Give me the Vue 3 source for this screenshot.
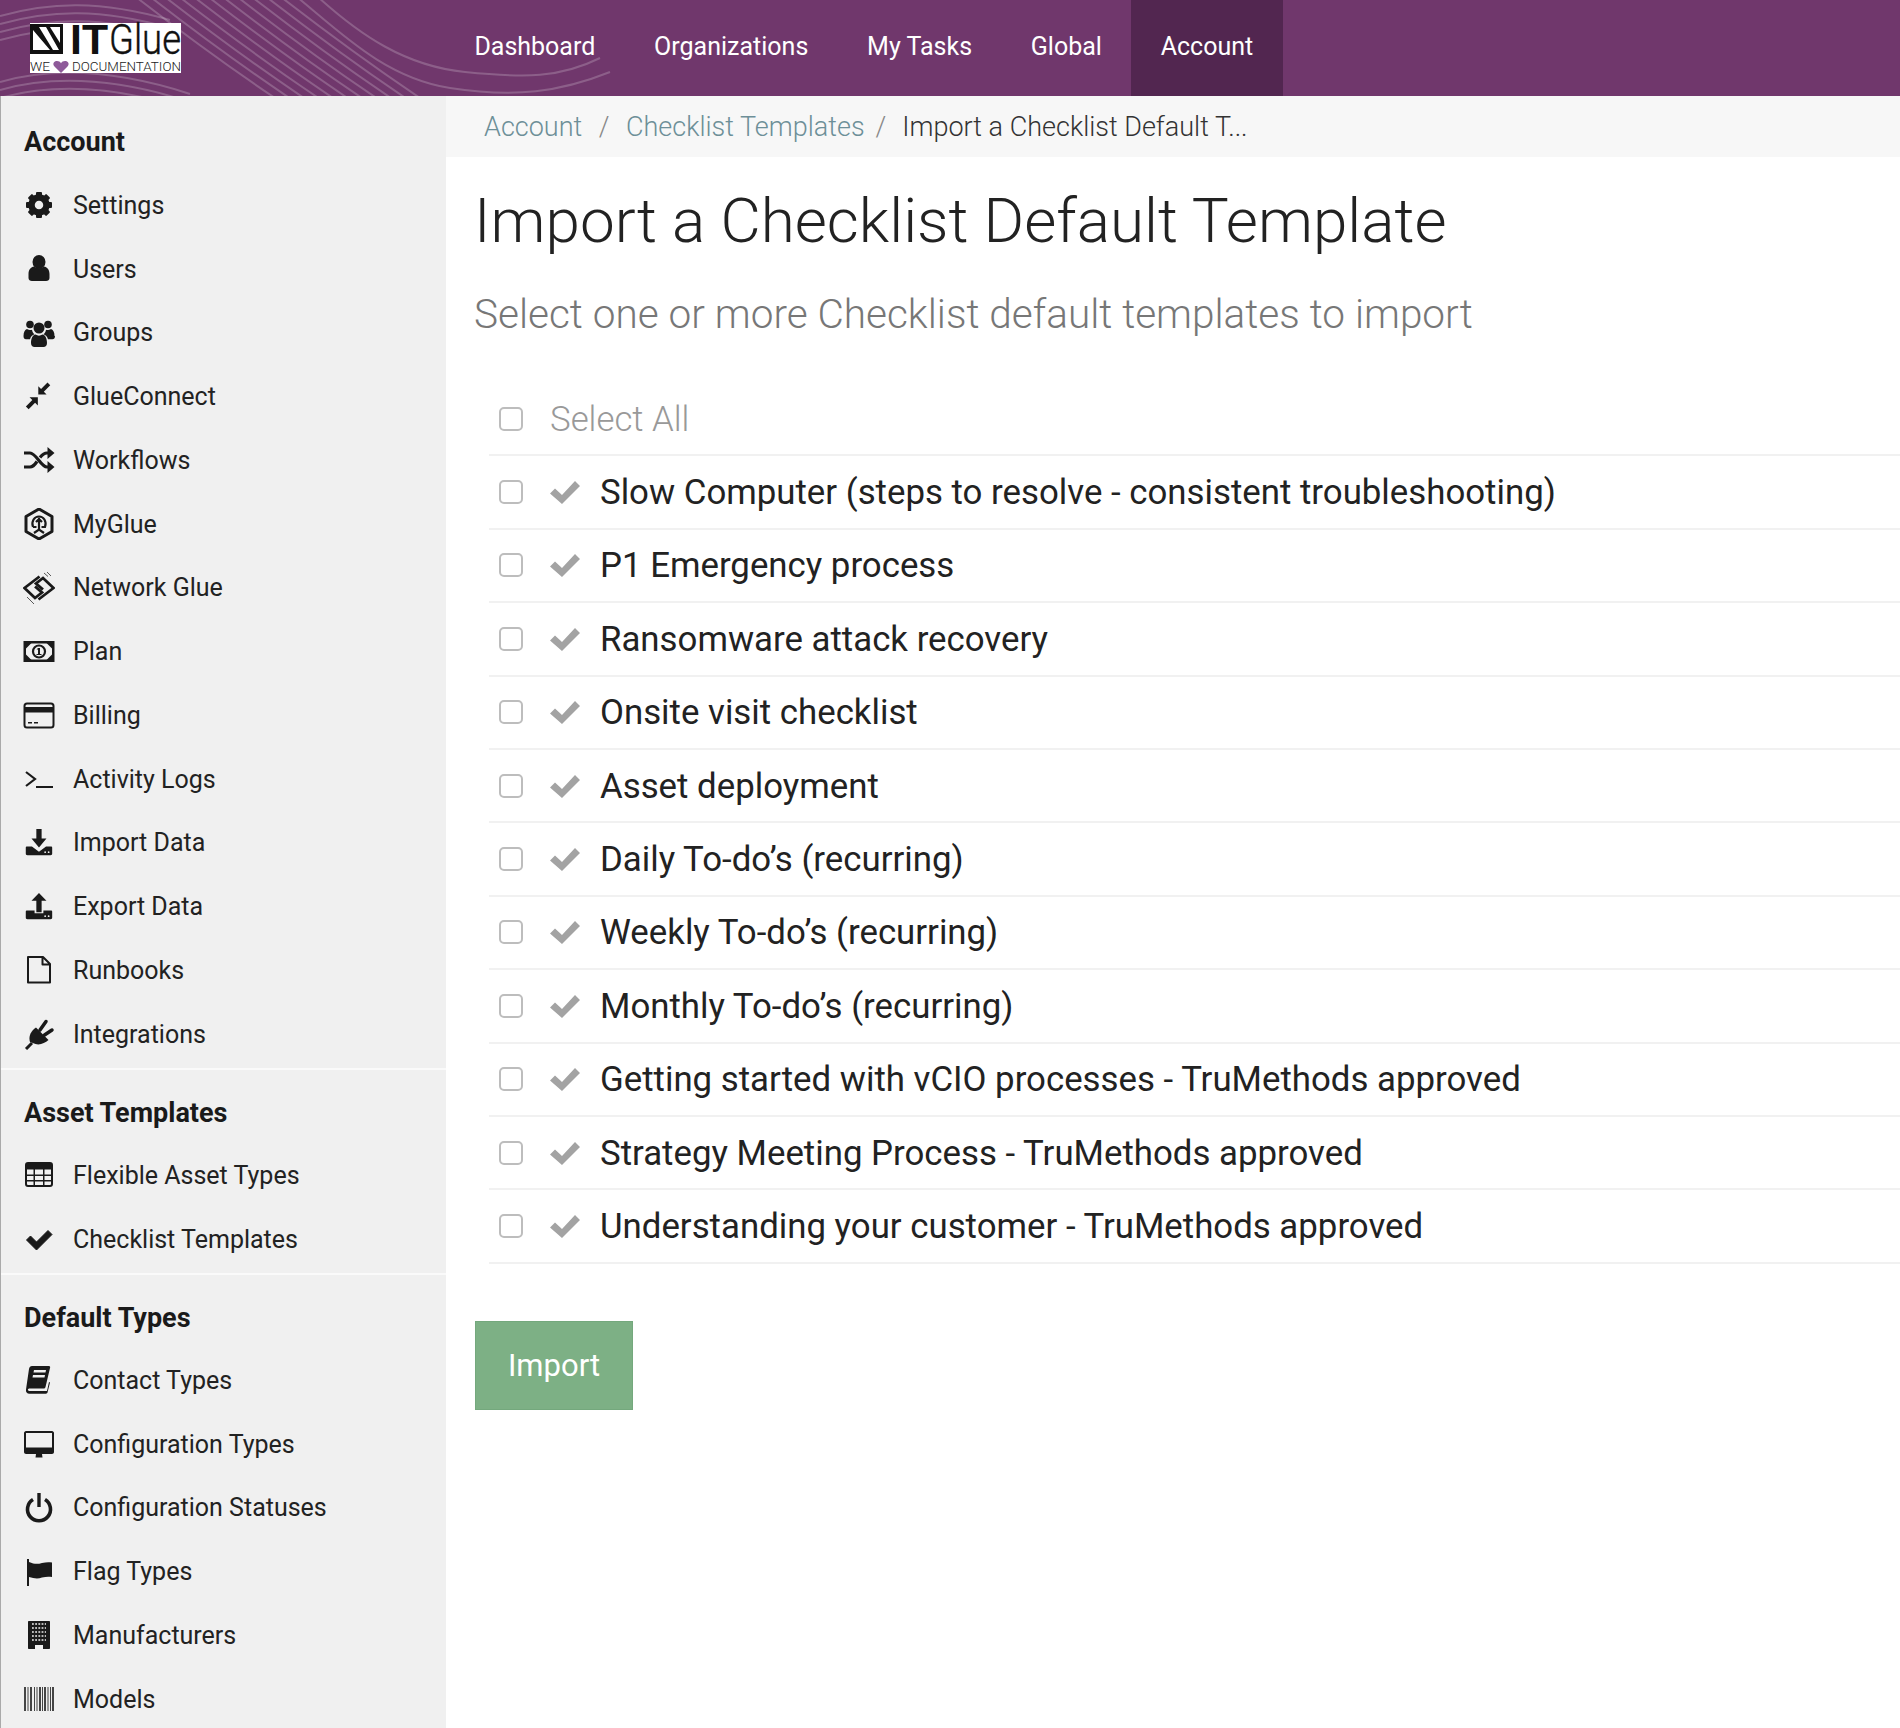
<script setup>
const navItems = ['Dashboard', 'Organizations', 'My Tasks', 'Global', 'Account']

// background lines of the header
const waves = []
for (let i = 0; i < 11; i++) {
  const x = 136 + i * 14.500
  waves.push(`M${x} -3 C${x + 40} 28 ${x + 85} 62 ${x + 145} 102`)
}
waves.push('M297 -3 C340 32 385 78 450 88 S560 92 610 72')
waves.push('M318 -3 C360 35 405 66 465 72 S560 78 600 58')
for (let i = 0; i < 4; i++) {
  const y = 6 + i * 8
  waves.push(`M0 ${y + 10} C50 ${y - 4} 100 ${y - 6} 170 ${y + 14}`)
}
for (let i = 0; i < 3; i++) {
  const y = 76 + i * 8
  waves.push(`M0 ${y + 6} C50 ${y - 8} 110 ${y - 8} 190 ${y + 18}`)
}

const icons = {
  gear: '<circle cx="16" cy="16" r="7.500" fill="none" stroke="currentColor" stroke-width="6.500"/>' +
    [0, 45, 90, 135, 180, 225, 270, 315].map(a => `<rect x="13" y="3" width="6" height="6" rx="1" transform="rotate(${a} 16 16)"/>`).join(''),
  user: '<ellipse cx="16" cy="9" rx="6.500" ry="7"/><path d="M5.500 25v-4c0-4.500 2.500-7 5.500-7.500 3 2.200 7 2.200 10 0 3 .5 5.500 3 5.500 7.500v4c0 2-1.500 3-3.500 3H9c-2 0-3.500-1-3.500-3z"/>',
  group: '<circle cx="16" cy="11" r="5.500"/><circle cx="7" cy="7.500" r="3.800"/><circle cx="25" cy="7.500" r="3.800"/><path d="M.5 19c0-4 1.500-6.500 3.500-7 2 1.300 4 1.300 5 .8.300 2 1.300 3.500 2.500 4.500-2 .7-4 2.500-4.500 5H3c-1.500 0-2.500-1-2.500-3.300zM31.500 19c0-4-1.500-6.500-3.500-7-2 1.300-4 1.300-5 .8-.3 2-1.300 3.500-2.500 4.500 2 .7 4 2.500 4.500 5h4.500c1.500 0 2.500-1 2.500-3.300z"/><path d="M8 26c0-5 2-8 4.500-8.500 2.200 1.500 4.800 1.500 7 0C22 18 24 21 24 26c0 2.500-1.500 4-3.500 4h-9C9.500 30 8 28.500 8 26z"/>',
  compress: '<path d="M28 3l-7 7 3 3h-9V4l3 3 7-7zM4.500 29l7-7 3 3v-9h-9l3 3-7 7z" transform="translate(1.500 1.500) scale(.92)"/>',
  shuffle: '<path d="M1 9h6c6 0 11 14 17 14h2M1 23h6c2.500 0 5-2.500 7-5.500M17 13.500C19 11 21.500 9 24 9h2" fill="none" stroke="currentColor" stroke-width="3.200"/><path d="M24.500 3l7 6-7 6zM24.500 17l7 6-7 6z"/>',
  myglue: '<path d="M16 1l13 7.500v15L16 31 3 23.500v-15z" fill="none" stroke="currentColor" stroke-width="3" stroke-linejoin="round"/><path d="M10 19c-2-6 1.500-10.500 6-10.500S24 13 22 19h-3.500M10 19h3.500M16 10v12M13 14l3-3 3 3M11 25l5-3.500 5 3.500" fill="none" stroke="currentColor" stroke-width="2.200"/>',
  network: '<path d="M16.500 4.500L1.500 16 12 26l7-5.500-7-6M15.500 27.500L30.500 16 20 6l-7 5.500 7 6" fill="none" stroke="currentColor" stroke-width="2.800"/><path d="M21 1l4 3.500M24 0l4 4M4 25l4 4M7 28l4 4" stroke="currentColor" stroke-width="1" opacity=".7"/>',
  money: '<path d="M.5 5h31v21H.5zM3 7.500v16h26v-16z" fill-rule="evenodd"/><path d="M3 7h5.500L3 12.500zM29 7h-5.500l5.500 5.500zM3 24h5.500L3 18.500zM29 24h-5.500l5.500-5.500z"/><circle cx="16" cy="15.500" r="6" fill="none" stroke="currentColor" stroke-width="2.200"/><path d="M15 12h2v6h1.500v1h-5v-1H15v-4.500h-1.500z"/>',
  card: '<rect x="1.500" y="4.500" width="29" height="24" rx="2.500" fill="none" stroke="currentColor" stroke-width="2"/><rect x="2" y="8" width="28" height="5.500"/><path d="M5 23h4v1.500H5zM11 23h4v1.500h-4z"/>',
  terminal: '<path d="M3 9l9 7-9 7" fill="none" stroke="currentColor" stroke-width="2.200"/><path d="M13 23h17v2H13z"/>',
  download: '<g transform="translate(1.900 1.900) scale(.88)"><path d="M13 0h6v11h5.500L16 21 7.500 11H13z"/><path d="M2 20h6l8 6 8-6h6c.6 0 1 .4 1 1v7c0 1-.5 2-2 2H3c-1.500 0-2-1-2-2v-7c0-.6.4-1 1-1z"/><circle cx="23" cy="26.500" r="1" fill="#f0f0f0"/><circle cx="27" cy="26.500" r="1" fill="#f0f0f0"/></g>',
  upload: '<g transform="translate(1.900 1.900) scale(.88)"><path d="M16 0l8.500 9H19v13h-6V9H7.500z"/><path d="M2 20h9v3h10v-3h9c.6 0 1 .4 1 1v7c0 1-.5 2-2 2H3c-1.500 0-2-1-2-2v-7c0-.6.4-1 1-1z"/><circle cx="23" cy="26.500" r="1" fill="#f0f0f0"/><circle cx="27" cy="26.500" r="1" fill="#f0f0f0"/></g>',
  file: '<path d="M5 3h15l7 7v18.500H5zM19.500 3v7.500H27" fill="none" stroke="currentColor" stroke-width="2" stroke-linejoin="round"/>',
  plug: '<path d="M3 31l6-6" stroke="currentColor" stroke-width="3" fill="none"/><path d="M7 24c-1.500-5 0-9 4-13l2-1.500L25.500 22c-3.500 3-8.500 5.500-13 4z"/><path d="M17 12l6-8.500M21.500 17l7.500-5" stroke="currentColor" stroke-width="3.500" stroke-linecap="round" fill="none"/>',
  table: '<rect x="3" y="4" width="26" height="23" rx="2" fill="none" stroke="currentColor" stroke-width="2"/><path d="M3 5h26v5.500H3zM3 15.500h26v1.500H3zM3 21h26v1.500H3zM10.500 10h1.500v17h-1.500zM20 10h1.500v17H20z"/>',
  check: '<path d="M3.500 17l4-4 6 6L25 7.500l4 4L13.500 27z" stroke="currentColor" stroke-width="1" stroke-linejoin="round"/>',
  book: '<path d="M9 2h17c1 0 1.500 1 1 2l-4.500 19c-.3 1-1 1.500-2 1.500H7c-1.500 0-2.500.5-2 1.500s1 1 2 1h17l2-9 1 .5-2.500 10c-.2.7-.8 1.200-1.500 1.200H6.500C4 29.700 2.500 28 3 25.500L6 5c.3-2 1.500-3 3-3z"/><path d="M11 6h12l-.5 2.500h-12zM10 11h12l-.5 2.500h-12z" fill="#f0f0f0"/>',
  desktop: '<path d="M3 3h26c1 0 2 1 2 2v19c0 1-1 2-2 2H19l.5 3.500h-7L13 26H3c-1 0-2-1-2-2V5c0-1 1-2 2-2zm0 2v14.500h26V5z" fill-rule="evenodd"/>',
  power: '<path d="M10 7.500a11.500 11.500 0 1 0 12 0" fill="none" stroke="currentColor" stroke-width="3.600"/><path d="M14.300 1h3.400v14h-3.400z"/>',
  flag: '<path d="M4 3h2v27H4z"/><path d="M6 6c5 2 8 2.500 13 1 4-1 7-1 10-.5v14.500c-3-.5-6-.5-10 .5-4 1.500-8 1-13-.5z"/>',
  building: '<path d="M6 2h20c.6 0 1 .4 1 1v26c0 .6-.4 1-1 1h-6v-4h-8v4H6c-.6 0-1-.4-1-1V3c0-.6.4-1 1-1z"/><path d="M9 5h14M9 9h14M9 13h14M9 17h14M9 21h14" stroke="#f0f0f0" stroke-width="1.700" stroke-dasharray="1.800 1.400"/>',
  barcode: '<path d="M1 4h2v24H1zM4.500 4h1v24h-1zM7 4h2v24H7zM11 4h1v24h-1zM13.500 4h1v24h-1zM16 4h2v24h-2zM19 4h1v24h-1zM21 4h2v24h-2zM24.500 4h1v24h-1zM27 4h1v24h-1zM29 4h2v24h-2z" fill-opacity=".8"/>'
}

const sections = [
  {
    title: 'Account',
    items: [
      ['gear', 'Settings'], ['user', 'Users'], ['group', 'Groups'], ['compress', 'GlueConnect'],
      ['shuffle', 'Workflows'], ['myglue', 'MyGlue'], ['network', 'Network Glue'], ['money', 'Plan'],
      ['card', 'Billing'], ['terminal', 'Activity Logs'], ['download', 'Import Data'],
      ['upload', 'Export Data'], ['file', 'Runbooks'], ['plug', 'Integrations']
    ]
  },
  {
    title: 'Asset Templates',
    items: [['table', 'Flexible Asset Types'], ['check', 'Checklist Templates']]
  },
  {
    title: 'Default Types',
    items: [
      ['book', 'Contact Types'], ['desktop', 'Configuration Types'], ['power', 'Configuration Statuses'],
      ['flag', 'Flag Types'], ['building', 'Manufacturers'], ['barcode', 'Models']
    ]
  }
]

const templates = [
  'Slow Computer (steps to resolve - consistent troubleshooting)',
  'P1 Emergency process',
  'Ransomware attack recovery',
  'Onsite visit checklist',
  'Asset deployment',
  'Daily To-do’s (recurring)',
  'Weekly To-do’s (recurring)',
  'Monthly To-do’s (recurring)',
  'Getting started with vCIO processes - TruMethods approved',
  'Strategy Meeting Process - TruMethods approved',
  'Understanding your customer - TruMethods approved'
]
</script>

<template>
  <div class="page">
    <header class="topbar">
      <svg class="waves" width="640" height="96" viewBox="0 0 640 96">
        <path v-for="(d, i) in waves" :key="i" :d="d" fill="none" stroke="#fff" stroke-opacity="0.2" stroke-width="2" />
      </svg>
      <svg class="logo" width="151" height="50" viewBox="0 0 151 50">
        <rect width="151" height="50" fill="#fff" />
        <path d="M0 1h33v30H0zM3 7v20h17zM9 4l14 23h6L16 4zM20 4l10 16V4z" fill-rule="evenodd" fill="#111" />
        <text x="40" y="31" class="logo-it" textLength="38" lengthAdjust="spacingAndGlyphs">IT</text>
        <text x="79" y="31" class="logo-glue" textLength="72" lengthAdjust="spacingAndGlyphs">Glue</text>
        <text x="0" y="48" class="logo-sub" textLength="20" lengthAdjust="spacingAndGlyphs">WE</text>
        <path d="M31 50l-6.500-6.500C22 40.500 24 38 27 38c1.800 0 3.200.8 4 2.300.8-1.500 2.200-2.300 4-2.300 3 0 5 2.500 2.500 5.500z" fill="#8e5a99" />
        <text x="42" y="48" class="logo-sub" textLength="109" lengthAdjust="spacingAndGlyphs">DOCUMENTATION</text>
      </svg>
      <nav class="nav">
        <a v-for="n in navItems" :key="n" class="nav-item" :class="{ active: n === 'Account' }">{{ n }}</a>
      </nav>
    </header>

    <div class="body">
      <aside class="sidebar">
        <section v-for="s in sections" :key="s.title" class="side-section">
          <h4>{{ s.title }}</h4>
          <a v-for="it in s.items" :key="it[1]" class="side-item">
            <svg class="side-icon" viewBox="0 0 32 32" fill="currentColor" v-html="icons[it[0]]"></svg>
            <span>{{ it[1] }}</span>
          </a>
        </section>
      </aside>

      <main class="main">
        <div class="crumbs">
          <a>Account</a>
          <i>/</i>
          <a>Checklist Templates</a>
          <i class="tight">/</i>
          <span>Import a Checklist Default T...</span>
        </div>
        <div class="content">
          <h1>Import a Checklist Default Template</h1>
          <h2>Select one or more Checklist default templates to import</h2>
          <ul class="list">
            <li class="row">
              <span class="box"></span>
              <span class="select-all">Select All</span>
            </li>
            <li v-for="t in templates" :key="t" class="row">
              <span class="box"></span>
              <svg class="tick" viewBox="0 0 30 24"><path d="M0 12.500l5-5 7 6.500L25 0l5 5-18 18z" fill="#a3a3a3" /></svg>
              <span class="name">{{ t }}</span>
            </li>
          </ul>
          <button class="import">Import</button>
        </div>
      </main>
    </div>
  </div>
</template>

<style>
html, body { margin: 0; background: #fff; }
</style>

<style scoped>
.page {
  width: 1900px;
  height: 1728px;
  overflow: hidden;
  font-family: Roboto, "Liberation Sans", sans-serif;
  display: flex;
  flex-direction: column;
}

.topbar {
  position: relative;
  height: 96px;
  flex: none;
  background: #70376c;
  display: flex;
  align-items: center;
}
.waves { position: absolute; left: 0; top: 0; }

.logo {
  position: relative;
  margin: -1px 0 0 30px;
  flex: none;
  overflow: visible;
}
.logo-it { font: bold 42px "Liberation Sans", sans-serif; fill: #111; }
.logo-glue { font: 300 42px Roboto, sans-serif; fill: #111; stroke: #111; stroke-width: 0.4px; }
.logo-sub { font: 300 12px Roboto, sans-serif; fill: #222; }

.nav { position: relative; display: flex; margin-left: 264px; height: 96px; }
.nav-item {
  display: flex;
  align-items: center;
  box-sizing: border-box;
  padding: 0 29.400px 3px;
  font-size: 25px;
  color: #fff;
}
.nav-item.active { background: #522650; }

.body { flex: 1; display: flex; min-height: 0; }

.sidebar {
  width: 445px;
  flex: none;
  background: #f0f0f0;
  border-left: 1px solid #aaa;
  padding-top: 3px;
  overflow: hidden;
}
.side-section { padding: 16px 0 2px; border-bottom: 2px solid #fafafa; }
.side-section:last-child { border-bottom: 0; }
.side-section h4 {
  margin: 0 0 3.500px;
  height: 54px;
  line-height: 54px;
  padding-left: 23px;
  font-size: 27px;
  font-weight: 700;
  color: #1a1a1a;
}
.side-section:first-child h4 { margin-bottom: 4.500px; }
.side-item {
  display: flex;
  align-items: center;
  height: 63.750px;
  padding-left: 22px;
  font-size: 25px;
  color: #222;
}
.side-icon { width: 32px; height: 32px; margin-right: 18px; color: #1a1a1a; flex: none; }

.main { flex: 1; min-width: 0; }

.crumbs {
  height: 61px;
  background: #f7f7f7;
  display: flex;
  align-items: center;
  padding-left: 38px;
  font-size: 27px;
  font-weight: 300;
  color: #6d8f98;
}
.crumbs i { font-style: normal; color: #888; margin: 0 16.500px; }
.crumbs i.tight { margin: 0 16px 0 11px; }
.crumbs span { color: #333; }

.content { padding-left: 28px; }
h1 {
  margin: 28px 0 0;
  font-size: 62px;
  line-height: 72px;
  font-weight: 300;
  color: #222;
}
h2 {
  margin: 33px 0 0;
  font-size: 40.500px;
  line-height: 48px;
  font-weight: 300;
  color: #777;
}

.list { list-style: none; margin: 45px 0 0 15px; padding: 0; }
.row {
  box-sizing: border-box;
  height: 73.400px;
  padding-left: 10px;
  display: flex;
  align-items: center;
  border-bottom: 2px solid #f1f1f1;
}
.box {
  box-sizing: border-box;
  width: 24px;
  height: 24px;
  border: 2px solid #bdbdbd;
  border-radius: 5px;
  background: #fff;
  flex: none;
}
.select-all { margin-left: 27px; font-size: 34.800px; font-weight: 300; color: #999; }
.tick { width: 30px; height: 24px; margin: 2px 0 0 27px; flex: none; }
.name { margin-left: 20px; font-size: 34.800px; color: #222; white-space: nowrap; }

.import {
  display: block;
  margin: 57px 0 0 1px;
  width: 158px;
  height: 89px;
  border: 1px solid #74a87d;
  background: #7db085;
  color: #fff;
  font-family: inherit;
  font-size: 31px;
  font-weight: 400;
  padding: 0;
}
</style>
